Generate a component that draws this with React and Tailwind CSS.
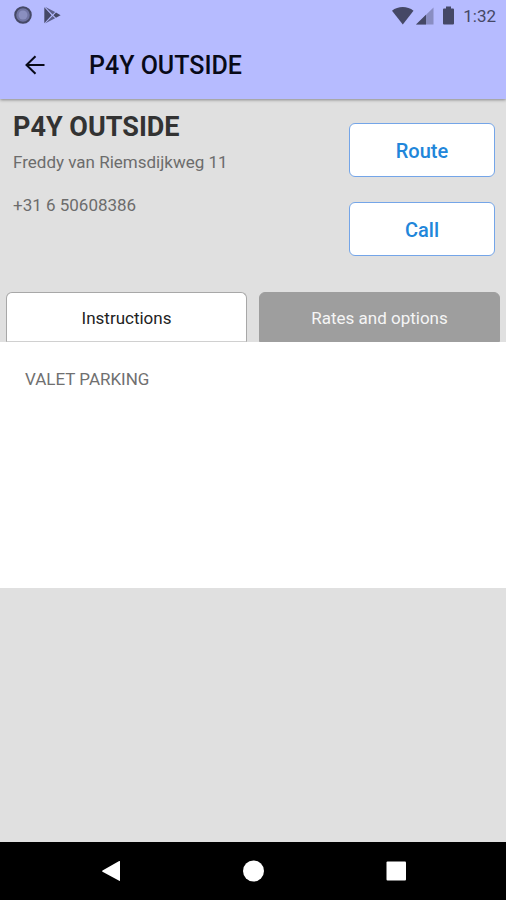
import { useState } from 'react';

const TABS = [
  { id: 'instructions', label: 'Instructions' },
  { id: 'rates', label: 'Rates and options' },
];

function StatusBar() {
  return (
    <div className="h-8 pl-3 pr-2.5 flex items-center justify-between text-[#454866]">
      <div className="flex items-center gap-2">
        <svg width="22" height="22" viewBox="0 0 22 22">
          <circle cx="11" cy="10" r="7.8" fill="#7074a3" stroke="#454866" strokeWidth="2" />
          <circle cx="11" cy="10" r="4.5" fill="#8a8fc0" />
        </svg>
        <svg width="20" height="22" viewBox="0 0 20 22">
          <path d="M2.3 2.2v16l7.3-8z" fill="currentColor" />
          <path d="M3 1.800l7.600 7.600 2.500-2.300zM3 18.500l7.600-7.600 2.500 2.300z" fill="#5c608a" />
          <path d="M14 7.600l4.600 2.600-4.600 2.500-2.600-2.500z" fill="currentColor" />
        </svg>
      </div>
      <div className="flex items-center">
        <svg width="24" height="20" viewBox="0 0 24 20" fill="currentColor">
          <path d="M1 4.700C7-.1 16.500-.1 22.500 4.700L11.800 18.500z" />
        </svg>
        <svg width="20" height="20" viewBox="0 0 20 20" fill="currentColor">
          <path d="M18.500 1.500v17H1z" opacity="0.4" />
          <path d="M11 8.800v9.700H1z" />
        </svg>
        <svg width="28" height="20" viewBox="0 0 28 20" fill="currentColor">
          <path d="M11 .5h5v2h2a1 1 0 0 1 1 1v14a1 1 0 0 1-1 1H9a1 1 0 0 1-1-1v-14a1 1 0 0 1 1-1h2z" />
        </svg>
        <span className="text-[17px] leading-5">1:32</span>
      </div>
    </div>
  );
}

function ActionButton({ children }) {
  return (
    <button
      type="button"
      className="h-[54px] w-full pt-0.5 rounded-md border border-[#74a5e8] bg-white text-xl font-medium text-[#2186da]"
    >
      {children}
    </button>
  );
}

function NavBar() {
  return (
    <nav className="h-[58px] shrink-0 bg-black flex items-center justify-center gap-[118px]">
      <button type="button" aria-label="Back">
        <svg width="24" height="24" viewBox="0 0 24 24" fill="#fff">
          <path d="M21 2.500v19q0 .8-.8.300L3.500 12.700q-.9-.7 0-1.300L20.200 2q.8-.4.8.5z" />
        </svg>
      </button>
      <button type="button" aria-label="Home">
        <svg width="24" height="24" viewBox="0 0 24 24" fill="#fff">
          <circle cx="12.500" cy="12" r="10.500" />
        </svg>
      </button>
      <button type="button" aria-label="Recent apps">
        <svg width="24" height="24" viewBox="0 0 24 24" fill="#fff">
          <rect x="3.500" y="2.500" width="19.500" height="19" rx="1" />
        </svg>
      </button>
    </nav>
  );
}

export default function App() {
  const [active, setActive] = useState('instructions');

  return (
    <div className="min-h-screen flex flex-col bg-[#e0e0e0] font-['Roboto',sans-serif]">
      <header className="relative bg-[#b6bbff] shadow-[0_1px_3px_rgba(0,0,0,0.4)]">
        <StatusBar />
        <div className="h-[67px] px-6 flex items-center gap-[43px]">
          <button type="button" aria-label="Go back">
            <svg width="22" height="22" viewBox="0 0 22 22" fill="none" stroke="#080a18" strokeWidth="2">
              <path d="M20.500 10H3M11.500 1.200L2.500 10l9 8.800" />
            </svg>
          </button>
          <h1 className="text-[25px] font-medium text-[#080a18]">P4Y OUTSIDE</h1>
        </div>
      </header>

      <main className="flex-1">
        <section className="pl-[13px] pr-[11px] pt-3 flex justify-between">
          <div>
            <h2 className="text-[27px] leading-8 font-bold text-[#333]">P4Y OUTSIDE</h2>
            <address className="not-italic text-[17px] leading-6 text-[#6c6c6c]">
              <p className="mt-[7px]">Freddy van Riemsdijkweg 11</p>
              <p className="mt-[19px]">+31 6 50608386</p>
            </address>
          </div>
          <div className="w-[146px] pt-3 flex flex-col gap-[25px]">
            <ActionButton>Route</ActionButton>
            <ActionButton>Call</ActionButton>
          </div>
        </section>

        {/* Tabs */}
        <div role="tablist" className="mt-9 px-1.5 grid grid-cols-2 gap-3">
          {TABS.map((tab) => (
            <button
              key={tab.id}
              id={`tab-${tab.id}`}
              type="button"
              role="tab"
              aria-selected={active === tab.id}
              aria-controls="tab-panel"
              onClick={() => setActive(tab.id)}
              className={`h-[50px] pt-1 rounded-t-md border text-[17px] ${
                active === tab.id
                  ? 'bg-white border-[#a8a8a8] border-b-[#d0d0d0] text-[#222]'
                  : 'bg-[#9e9e9e] border-[#9e9e9e] text-[#f5f5f5]'
              }`}
            >
              {tab.label}
            </button>
          ))}
        </div>
        <div
          id="tab-panel"
          role="tabpanel"
          aria-labelledby={`tab-${active}`}
          className="min-h-[246px] bg-white px-[25px] py-[25px] text-[17px] leading-6 text-[#707070]"
        >
          {active === 'instructions' && <p>VALET PARKING</p>}
        </div>
      </main>

      <NavBar />
    </div>
  );
}
